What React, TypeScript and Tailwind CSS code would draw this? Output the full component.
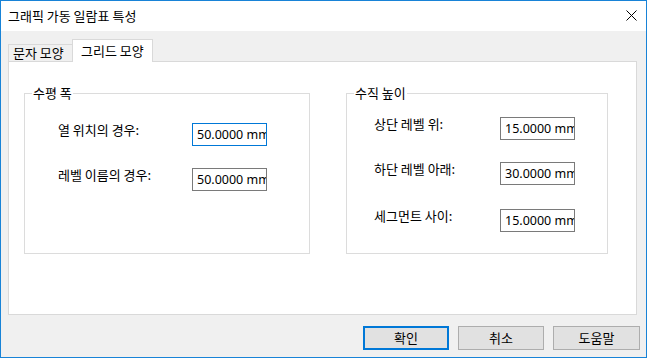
import React from "react";

const font = { fontFamily: '"Noto Sans CJK KR", "Noto Sans", sans-serif' };

function TextBox({ value, focused }: { value: string; focused?: boolean }) {
  return (
    <div
      className={
        "w-[75px] h-[23px] border bg-white overflow-hidden whitespace-nowrap pl-[4px] text-[12.5px] leading-[21px] text-black " +
        (focused ? "border-[#0078d7]" : "border-[#7a7a7a]")
      }
      style={{ fontFamily: '"Noto Sans", "Open Sans", sans-serif' }}
    >
      {value}
    </div>
  );
}

function Row({
  label,
  value,
  labelW,
  focused,
  mt,
}: {
  label: string;
  value: string;
  labelW: string;
  focused?: boolean;
  mt: string;
}) {
  return (
    <div className={"flex items-start " + mt}>
      <div className={labelW + " text-[13px] leading-[16px] mt-[-1px] text-black whitespace-nowrap"}>{label}</div>
      <TextBox value={value} focused={focused} />
    </div>
  );
}

function Group({
  title,
  className,
  children,
}: {
  title: string;
  className: string;
  children: React.ReactNode;
}) {
  return (
    <div className={"relative border border-[#dcdcdc] " + className}>
      <span className="absolute left-[7px] top-[-9px] bg-white px-[1px] text-[13px] leading-[16px] text-black">
        {title}
      </span>
      {children}
    </div>
  );
}

function Button({ label, primary, w }: { label: string; primary?: boolean; w: string }) {
  return (
    <div
      className={
        w +
        " h-[24px] flex items-center justify-center bg-[#e1e1e1] text-[13px] text-black " +
        (primary ? "border-2 border-[#0078d7]" : "border border-[#adadad]")
      }
    >
      {label}
    </div>
  );
}

export default function App() {
  return (
    <div
      className="w-[647px] h-[358px] border border-[#1883d7] bg-[#f0f0f0] flex flex-col overflow-hidden"
      style={font}
    >
      <div className="h-[30px] bg-white flex items-center justify-between pl-[7px] pr-[9px] shrink-0">
        <span className="text-[13px] leading-[16px] text-black">그래픽 가동 일람표 특성</span>
        <svg width="11" height="11" viewBox="0 0 11 11" className="mt-[-1px]">
          <path d="M0.5 0.5 L10.5 10.5 M10.5 0.5 L0.5 10.5" stroke="#000" strokeWidth="1" />
        </svg>
      </div>
      <div className="flex-1 pl-[7px] pt-[8px]">
        <div className="flex items-end h-[22px]">
          <div className="w-[65px] h-[17px] border border-b-0 border-[#d9d9d9] bg-[#f0f0f0] flex items-center pl-[4px] text-[13px] leading-[16px] text-black whitespace-nowrap">
            문자 모양
          </div>
          <div className="relative z-10 -ml-px -mb-px w-[81px] h-[23px] border border-b-0 border-[#d9d9d9] bg-white flex items-center pl-[8px] text-[13px] leading-[16px] text-black whitespace-nowrap">
            그리드 모양
          </div>
        </div>
        <div className="w-[629px] h-[254px] border border-[#d9d9d9] bg-white flex items-start pt-[31px] pl-[15px]">
          <Group title="수평 폭" className="w-[286px] h-[161px] pl-[33px] pt-[29px]">
            <Row label="열 위치의 경우:" value="50.0000 mm" labelW="w-[134px]" focused mt="" />
            <Row label="레벨 이름의 경우:" value="50.0000 mm" labelW="w-[134px]" mt="mt-[22px]" />
          </Group>
          <Group title="수직 높이" className="ml-[36px] w-[262px] h-[161px] pl-[27px] pt-[23px]">
            <Row label="상단 레벨 위:" value="15.0000 mm" labelW="w-[126px]" mt="" />
            <Row label="하단 레벨 아래:" value="30.0000 mm" labelW="w-[126px]" mt="mt-[22px]" />
            <Row label="세그먼트 사이:" value="15.0000 mm" labelW="w-[126px]" mt="mt-[24px]" />
          </Group>
        </div>
        <div className="flex justify-end gap-[9px] mt-[11px] pr-[6px]">
          <Button label="확인" primary w="w-[86px]" />
          <Button label="취소" w="w-[86px]" />
          <Button label="도움말" w="w-[87px]" />
        </div>
      </div>
    </div>
  );
}
